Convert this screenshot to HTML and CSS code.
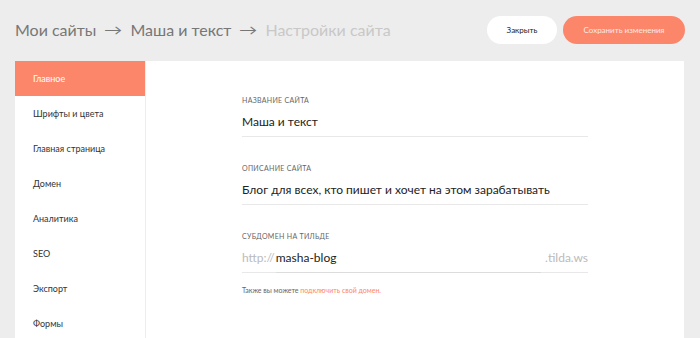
FILE: index.html
```html
<!DOCTYPE html>
<html lang="ru">
<head>
    <meta charset="UTF-8">
    <title>Настройки сайта</title>
    <link rel="stylesheet" href="styles.css">
</head>
<body>
    <div class="topbar">
        <div class="crumbs">
            <span class="crumb">Мои сайты</span>
            <span class="arrow">&rarr;</span>
            <span class="crumb">Маша и текст</span>
            <span class="arrow">&rarr;</span>
            <span class="crumb current">Настройки сайта</span>
        </div>
        <div class="actions">
            <button class="btn btn-close">Закрыть</button>
            <button class="btn btn-save">Сохранить изменения</button>
        </div>
    </div>
    <div class="panel">
        <div class="sidebar">
            <div class="menu-item active">Главное</div>
            <div class="menu-item">Шрифты и цвета</div>
            <div class="menu-item">Главная страница</div>
            <div class="menu-item">Домен</div>
            <div class="menu-item">Аналитика</div>
            <div class="menu-item">SEO</div>
            <div class="menu-item">Экспорт</div>
            <div class="menu-item">Формы</div>
        </div>
        <div class="content">
            <div class="field">
                <div class="field-label">Название сайта</div>
                <div class="field-input">Маша и текст</div>
            </div>
            <div class="field">
                <div class="field-label">Описание сайта</div>
                <div class="field-input">Блог для всех, кто пишет и хочет на этом зарабатывать</div>
            </div>
            <div class="field">
                <div class="field-label">Субдомен на Тильде</div>
                <div class="field-input domain">
                    <span class="prefix">http://</span>
                    <span class="sub">masha-blog</span>
                    <span class="suffix">.tilda.ws</span>
                </div>
                <div class="hint">Также вы можете <span class="link">подключить свой домен.</span></div>
            </div>
        </div>
    </div>
</body>
</html>
```

FILE: styles.css
```css
* {
    margin: 0;
    padding: 0;
    box-sizing: border-box;
}
body {
    font-family: 'Lato', 'Noto Sans', sans-serif;
    background: #ededed;
    color: #222;
    height: 338px;
    overflow: hidden;
    padding: 0 15px;
}
.topbar {
    height: 61px;
    display: flex;
    align-items: center;
    justify-content: space-between;
}
.crumbs {
    display: flex;
    align-items: center;
    gap: 10px;
    font-size: 16px;
    color: #777;
    padding-bottom: 2px;
}
.crumbs .current {
    color: #c8c8c8;
}
.arrow {
    font-size: 14px;
    color: #777;
    transform: scaleX(1.3);
}
.actions {
    display: flex;
    gap: 6px;
    padding-bottom: 2px;
}
.btn {
    height: 28px;
    border: none;
    border-radius: 14px;
    font-family: inherit;
    font-size: 8px;
    cursor: pointer;
}
.btn-close {
    width: 70px;
    background: #fff;
    color: #222;
}
.btn-save {
    width: 122px;
    background: #fc866a;
    color: #fde9e3;
}
.panel {
    display: flex;
    background: #fff;
    height: 277px;
    margin-right: 1px;
}
.sidebar {
    width: 131px;
    border-right: 1px solid #eee;
}
.menu-item {
    height: 35px;
    display: flex;
    align-items: center;
    padding-left: 18px;
    font-size: 9px;
    color: #333;
}
.menu-item.active {
    background: #fc866a;
    color: #fff;
}
.content {
    padding: 35px 0 0 96px;
}
.field {
    width: 346px;
    margin-bottom: 27px;
}
.field-label {
    font-size: 7px;
    letter-spacing: 0.3px;
    text-transform: uppercase;
    color: #666;
    margin-bottom: 10px;
}
.field-input {
    font-size: 12px;
    color: #222;
    padding-bottom: 7px;
    border-bottom: 1px solid #e8e8e8;
}
.domain {
    display: flex;
    padding-bottom: 0;
}
.domain span {
    padding-bottom: 7px;
}
.prefix {
    color: #bbb;
    padding-right: 1px;
}
.sub {
    flex: 1;
    border-bottom: 1px solid #dcdcdc;
    margin-bottom: -1px;
    margin-right: 4px;
}
.suffix {
    color: #bbb;
}
.hint {
    font-size: 7px;
    color: #666;
    margin-top: 13px;
}
.link {
    color: #fc866a;
}
```
